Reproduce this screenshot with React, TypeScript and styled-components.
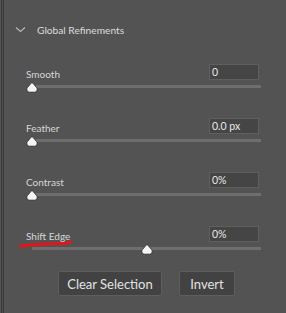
import React from "react";
import styled, { createGlobalStyle } from "styled-components";

const Global = createGlobalStyle`
  html, body { margin: 0; padding: 0; background: #535353; }
  body { width: 286px; height: 313px; overflow: hidden; font-family: Lato, "Open Sans", sans-serif; }
`;

const Frame = styled.div`
  display: flex;
  width: 286px;
  height: 313px;
  background: #535353;
`;

const EdgeRule = styled.div`
  width: 4px;
  flex: none;
  background: linear-gradient(to right, #535353 0 1px, #3b3b3b 1px 2px, #4c4c4c 2px 3px, #3b3b3b 3px 4px);
`;

const Panel = styled.div`
  flex: 1;
  display: flex;
  flex-direction: column;
  padding: 22px 25px 0 11px;
`;

const Header = styled.div`
  display: flex;
  align-items: center;
  height: 16px;
  gap: 11px;
  color: #dcdcdc;
  font-size: 10.2px;
  margin-bottom: 26px;
`;

const Chevron = styled.svg`
  width: 11px;
  height: 7px;
  flex: none;
  margin-top: -1px;
`;

const Groups = styled.div`
  display: flex;
  flex-direction: column;
  gap: 25px;
  padding-left: 11px;
`;

const Group = styled.div`
  display: flex;
  flex-direction: column;
`;

const Row = styled.div`
  display: flex;
  align-items: center;
  justify-content: space-between;
  height: 16px;
  padding-right: 2px;
`;

const Label = styled.span`
  position: relative;
  color: #d6d6d6;
  font-size: 10px;
  padding-top: 3px;
`;

const ValueBox = styled.div`
  box-sizing: border-box;
  width: 50px;
  height: 16px;
  background: #454545;
  border: 1px solid #5f5f5f;
  color: #e8e8e8;
  font-size: 10.5px;
  line-height: 14px;
  padding-left: 2px;
`;

const SliderArea = styled.div`
  position: relative;
  height: 11px;
  margin-top: 2px;
`;

const Track = styled.div`
  position: absolute;
  left: 6px;
  right: 0;
  top: 3px;
  height: 3px;
  background: #6e6e6e;
`;

const Thumb = styled.svg`
  position: absolute;
  top: 0;
  width: 12px;
  height: 11px;
  margin-left: -6px;
`;

const Scribble = styled.svg`
  position: absolute;
  left: -7px;
  top: 14px;
  width: 54px;
  height: 8px;
  overflow: visible;
`;

const ButtonRow = styled.div`
  display: flex;
  justify-content: center;
  gap: 17px;
  padding-left: 17px;
  margin-top: 16px;
`;

const Button = styled.button<{ $w: number }>`
  box-sizing: border-box;
  width: ${(p) => p.$w}px;
  height: 25px;
  background: #424242;
  border: 1px solid #5e5e5e;
  border-radius: 2px;
  color: #e2e2e2;
  font-family: Lato, "Open Sans", sans-serif;
  font-size: 13px;
  padding: 0;
`;

const TRACK_LEN = 229;

type Item = { label: string; value: string; pct: number; mark?: boolean };

const items: Item[] = [
  { label: "Smooth", value: "0", pct: 0 },
  { label: "Feather", value: "0.0 px", pct: 0 },
  { label: "Contrast", value: "0%", pct: 0 },
  { label: "Shift Edge", value: "0%", pct: 0.5, mark: true },
];

export default function App() {
  return (
    <>
      <Global />
      <Frame>
        <EdgeRule />
        <Panel>
          <Header>
            <Chevron viewBox="0 0 11 7">
              <path d="M1 1.5 L5.5 5.5 L10 1.5" fill="none" stroke="#b8b8b8" strokeWidth="1.1" />
            </Chevron>
            <span>Global Refinements</span>
          </Header>
          <Groups>
            {items.map((it) => (
              <Group key={it.label}>
                <Row>
                  <Label>
                    {it.label}
                    {it.mark && (
                      <Scribble viewBox="0 0 54 8">
                        <path
                          d="M1.5 5 Q20 3.2 42 2.6 Q49 2.4 51.5 1"
                          fill="none"
                          stroke="#e8131a"
                          strokeWidth="3"
                          strokeLinecap="round"
                        />
                      </Scribble>
                    )}
                  </Label>
                  <ValueBox>{it.value}</ValueBox>
                </Row>
                <SliderArea>
                  <Track />
                  <Thumb viewBox="0 0 12 11" style={{ left: 6 + it.pct * TRACK_LEN }}>
                    <path
                      d="M6 0.8 Q6.6 0.8 7.2 1.5 L10.6 5.6 Q11.4 6.6 11.2 8 Q10.9 10.2 8.8 10.2 H3.2 Q1.1 10.2 0.8 8 Q0.6 6.6 1.4 5.6 L4.8 1.5 Q5.4 0.8 6 0.8 Z"
                      fill="#f4f4f4"
                      stroke="#2e2e2e"
                      strokeWidth="0.9"
                    />
                  </Thumb>
                </SliderArea>
              </Group>
            ))}
          </Groups>
          <ButtonRow>
            <Button $w={104}>Clear Selection</Button>
            <Button $w={56}>Invert</Button>
          </ButtonRow>
        </Panel>
      </Frame>
    </>
  );
}
